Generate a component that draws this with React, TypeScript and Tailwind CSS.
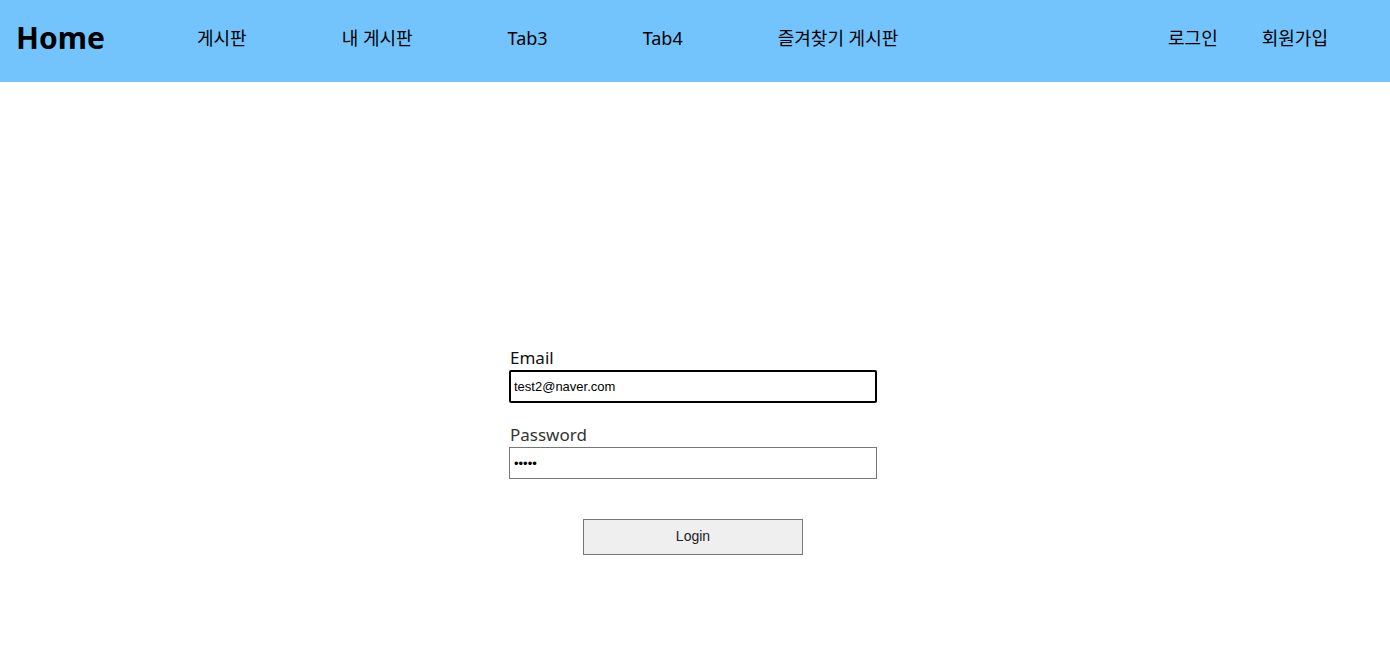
const font = { fontFamily: '"Noto Sans", "Noto Sans CJK KR", sans-serif' };
const arial = { fontFamily: '"Liberation Sans", Arial, sans-serif' };

const tabs = ["게시판", "내 게시판", "Tab3", "Tab4", "즐겨찾기 게시판"];

const App = () => {
  return (
    <div className="w-full min-h-[664px] bg-white" style={font}>
      <nav className="h-[82px] bg-[#73c4fc] flex items-center pb-[6px] text-black">
        <h1 className="pl-[16px] w-[197px] text-[30px] font-bold leading-none">Home</h1>
        <ul className="flex items-center gap-[95px] text-[18px]">
          {tabs.map((t) => (
            <li key={t}>{t}</li>
          ))}
        </ul>
        <ul className="ml-auto mr-[62px] flex items-center gap-[44px] text-[18px]">
          <li>로그인</li>
          <li>회원가입</li>
        </ul>
      </nav>
      <div className="flex justify-center pt-[264px] pr-[4px]">
        <form className="w-[368px] flex flex-col">
          <label className="text-[17px] leading-[24px] text-[#111] pl-[1px]">Email</label>
          <input
            className="h-[33px] border-2 border-black rounded-[2px] px-[3px] text-[13px] outline-none"
            style={arial}
            defaultValue="test2@naver.com"
          />
          <label className="mt-[20px] text-[17px] leading-[24px] text-[#333] pl-[1px]">Password</label>
          <input
            type="password"
            className="h-[32px] border border-[#767676] px-[4px] text-[13px] outline-none"
            style={arial}
            defaultValue="12345"
          />
          <div className="flex justify-center pt-[40px]">
            <button
              type="button"
              className="w-[220px] h-[36px] bg-[#efefef] border border-[#767676] pb-[2px] text-[14px] text-[#222]"
              style={arial}
            >
              Login
            </button>
          </div>
        </form>
      </div>
    </div>
  );
};

export default App;
